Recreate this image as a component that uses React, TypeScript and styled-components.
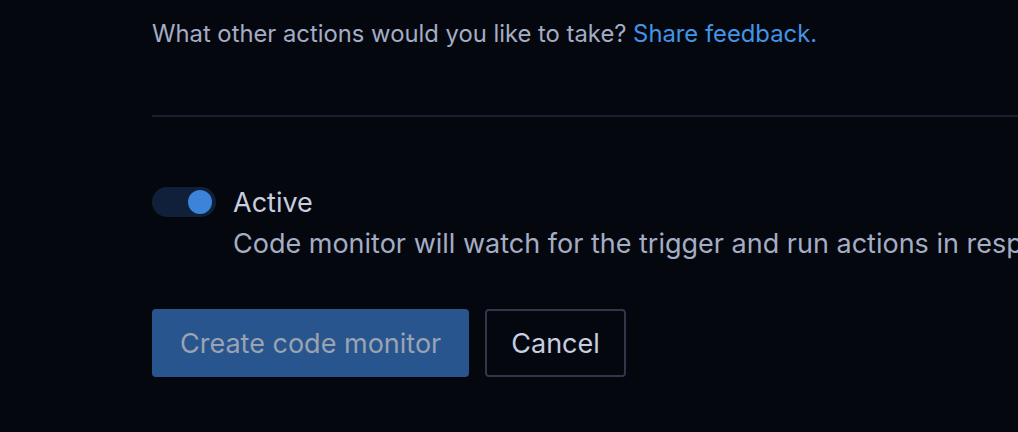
import styled, { createGlobalStyle } from 'styled-components'

const GlobalStyle = createGlobalStyle`
  html, body {
    margin: 0;
    padding: 0;
    background: #05070e;
    overflow: hidden;
  }
  body {
    font-family: Inter, 'Noto Sans', 'Liberation Sans', sans-serif;
    -webkit-font-smoothing: antialiased;
  }
`

const Page = styled.div`
  width: 1018px;
  height: 432px;
  padding-left: 152px;
  box-sizing: border-box;
  overflow: hidden;
`

const Feedback = styled.p`
  margin: 0;
  padding-top: 19px;
  font-size: 23.8px;
  line-height: 30px;
  color: #a3adc4;
  white-space: nowrap;

  a {
    color: #4394e6;
    text-decoration: none;
  }
`

const Divider = styled.hr`
  margin: 66px 0 0;
  border: none;
  border-top: 2px solid #1c1d2f;
  width: 1000px;
`

const ToggleRow = styled.div`
  display: flex;
  align-items: flex-start;
  gap: 17px;
  margin-top: 65px;
`

const Switch = styled.div<{ $on: boolean }>`
  flex: none;
  width: 64px;
  height: 30px;
  margin-top: 5px;
  border-radius: 15px;
  background: #11203a;
  display: flex;
  align-items: center;
  justify-content: ${(p) => (p.$on ? 'flex-end' : 'flex-start')};
  padding: 0 4px;
  box-sizing: border-box;

  &::after {
    content: '';
    width: 24px;
    height: 24px;
    border-radius: 50%;
    background: #3d83d9;
  }
`

const ToggleText = styled.div`
  display: flex;
  flex-direction: column;
  white-space: nowrap;
`

const Label = styled.span`
  font-size: 27px;
  line-height: 41px;
  color: #c7cee0;
`

const Hint = styled.span`
  font-size: 27px;
  line-height: 42px;
  color: #a3adc4;
`

const Actions = styled.div`
  display: flex;
  gap: 16px;
  margin-top: 44px;
`

const Button = styled.button<{ $primary?: boolean }>`
  height: 68px;
  padding: 0 ${(p) => (p.$primary ? 26 : 24)}px;
  font-family: inherit;
  font-size: 27px;
  border-radius: 4px;
  box-sizing: border-box;
  background: ${(p) => (p.$primary ? '#29558f' : '#05070e')};
  color: ${(p) => (p.$primary ? '#9aa3b1' : '#c7cee0')};
  border: 2px solid ${(p) => (p.$primary ? '#29558f' : '#30374b')};
`

export default function App() {
  return (
    <Page>
      <GlobalStyle />
      <Feedback>
        What other actions would you like to take? <a href="#">Share feedback.</a>
      </Feedback>
      <Divider />
      <ToggleRow>
        <Switch $on />
        <ToggleText>
          <Label>Active</Label>
          <Hint>Code monitor will watch for the trigger and run actions in response.</Hint>
        </ToggleText>
      </ToggleRow>
      <Actions>
        <Button $primary>Create code monitor</Button>
        <Button>Cancel</Button>
      </Actions>
    </Page>
  )
}
